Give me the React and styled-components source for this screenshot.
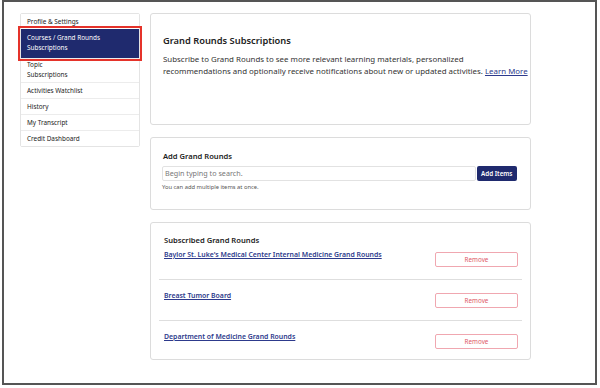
import React from "react";
import styled, { createGlobalStyle } from "styled-components";

const Global = createGlobalStyle`
  html, body { margin: 0; padding: 0; background: #fff; }
  body { font-family: "Noto Sans", "Open Sans", sans-serif; color: #222; }
  * { box-sizing: border-box; }
`;

const Frame = styled.div`
  margin-left: 2px;
  width: 595px;
  height: 385px;
  border: 2px solid #555;
  display: flex;
  align-items: flex-start;
  gap: 10px;
  padding: 11px 0 0 16px;
`;

const Sidebar = styled.nav`
  width: 120px;
  border: 1px solid #e4e4e4;
  border-radius: 2px;
  display: flex;
  flex-direction: column;
`;

const itemPadding = (p) => {
  if (p.$active) return "4px 6px 5px";
  if (p.$multi) return "1px 6px 3px";
  return "3px 6px 2.5px";
};

const NavItem = styled.div`
  font-size: 6.4px;
  line-height: ${(p) => (p.$active ? "10px" : "9.5px")};
  padding: ${itemPadding};
  color: ${(p) => (p.$active ? "#fff" : "#222")};
  background: ${(p) => (p.$active ? "#1f2a6e" : "#fff")};
  border-top: ${(p) => (p.$first || p.$active ? "none" : "1px solid #ececec")};
  outline: ${(p) => (p.$active ? "2px solid #e5332a" : "none")};
  outline-offset: 1px;
  position: relative;
  z-index: ${(p) => (p.$active ? 1 : 0)};
`;

const Main = styled.main`
  width: 381px;
  display: flex;
  flex-direction: column;
  gap: 12px;
`;

const Card = styled.section`
  border: 1px solid #dcdcdc;
  border-radius: 3px;
  background: #fff;
  height: ${(p) => p.$h}px;
  padding: ${(p) => p.$pad};
`;

const BigTitle = styled.h2`
  margin: 0 0 6px;
  font-size: 9.3px;
  font-weight: 600;
  line-height: 14px;
  color: #222;
`;

const Body = styled.p`
  margin: 0;
  font-size: 7.9px;
  line-height: 11.7px;
  color: #333;
  white-space: nowrap;
`;

const Link = styled.a`
  color: #2d3a8c;
  text-decoration: underline;
  font-weight: ${(p) => (p.$bold ? 600 : 400)};
  cursor: pointer;
`;

const Title = styled.h3`
  margin: 0;
  font-size: 7.6px;
  font-weight: 600;
  line-height: 12px;
  color: #222;
  padding-left: ${(p) => p.$indent || 0}px;
`;

const SearchRow = styled.div`
  display: flex;
  margin-top: 4px;
  height: 14.5px;
`;

const Input = styled.input`
  flex: 1;
  min-width: 0;
  border: 1px solid #e2e2e2;
  border-radius: 2px;
  font-family: inherit;
  font-size: 7.2px;
  padding: 0 2px;
  color: #333;
  &::placeholder { color: #777; }
`;

const PrimaryButton = styled.button`
  margin-left: 1px;
  width: 40.5px;
  border: none;
  border-radius: 2px;
  background: #1f2a6e;
  color: #fff;
  font-family: inherit;
  font-size: 6.3px;
  font-weight: 600;
  padding: 0;
`;

const Help = styled.div`
  margin-top: 3px;
  font-size: 5.8px;
  line-height: 7px;
  color: #555;
`;

const List = styled.div`
  display: flex;
  flex-direction: column;
`;

const Row = styled.div`
  display: flex;
  justify-content: space-between;
  align-items: flex-start;
  padding: ${(p) => (p.$first ? "5.5px" : "12.5px")} 4px 12.5px 5px;
  border-top: ${(p) => (p.$first ? "none" : "1px solid #dedede")};
`;

const RowLink = styled.div`
  font-size: 6.9px;
  line-height: 8px;
  margin-top: -0.5px;
`;

const RemoveButton = styled.button`
  width: 83px;
  height: 15px;
  border: 1px solid #f0a7b0;
  border-radius: 2px;
  background: #fff;
  color: #de5a68;
  font-family: inherit;
  font-size: 6.3px;
  padding: 0;
`;

const navItems = [
  "Profile & Settings",
  "Courses / Grand Rounds\nSubscriptions",
  "Topic\nSubscriptions",
  "Activities Watchlist",
  "History",
  "My Transcript",
  "Credit Dashboard",
];

const subscribed = [
  "Baylor St. Luke's Medical Center Internal Medicine Grand Rounds",
  "Breast Tumor Board",
  "Department of Medicine Grand Rounds",
];

export default function App() {
  return (
    <>
      <Global />
      <Frame>
        <Sidebar>
          {navItems.map((t, i) => {
            const lines = t.split("\n");
            return (
              <NavItem
                key={t}
                $first={i === 0}
                $active={i === 1}
                $multi={lines.length > 1}
              >
                {lines.map((line, j) => (
                  <div key={j}>{line}</div>
                ))}
              </NavItem>
            );
          })}
        </Sidebar>
        <Main>
          <Card $h={112} $pad="20px 12px 0 12px">
            <BigTitle>Grand Rounds Subscriptions</BigTitle>
            <Body>
              Subscribe to Grand Rounds to see more relevant learning materials, personalized
              <br />
              recommendations and optionally receive notifications about new or updated activities.{" "}
              <Link>Learn More</Link>
            </Body>
          </Card>
          <Card $h={73} $pad="12px 13px 0 11px">
            <Title $indent={1}>Add Grand Rounds</Title>
            <SearchRow>
              <Input placeholder="Begin typing to search." />
              <PrimaryButton>Add Items</PrimaryButton>
            </SearchRow>
            <Help>You can add multiple items at once.</Help>
          </Card>
          <Card $h={138} $pad="11px 8px 0 8px">
            <Title $indent={5}>Subscribed Grand Rounds</Title>
            <List>
              {subscribed.map((s, i) => (
                <Row key={s} $first={i === 0}>
                  <RowLink>
                    <Link $bold>{s}</Link>
                  </RowLink>
                  <RemoveButton>Remove</RemoveButton>
                </Row>
              ))}
            </List>
          </Card>
        </Main>
      </Frame>
    </>
  );
}
